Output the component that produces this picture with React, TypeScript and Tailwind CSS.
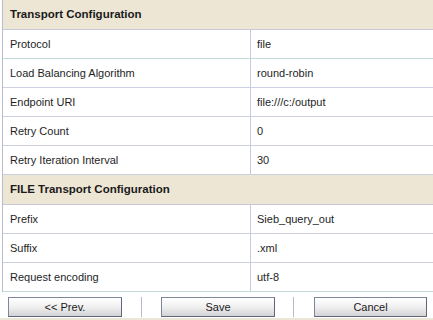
import React from "react";

type Row = { label: string; value: string; line?: string };

const transportRows: Row[] = [
  { label: "Protocol", value: "file", line: "border-[#c2dcdc]" },
  { label: "Load Balancing Algorithm", value: "round-robin" },
  { label: "Endpoint URI", value: "file:///c:/output" },
  { label: "Retry Count", value: "0" },
  { label: "Retry Iteration Interval", value: "30" },
];

const fileRows: Row[] = [
  { label: "Prefix", value: "Sieb_query_out" },
  { label: "Suffix", value: ".xml" },
  { label: "Request encoding", value: "utf-8", line: "border-[#c2dcdc]" },
];

function SectionHeader({ title }: { title: string }) {
  return (
    <div className="h-[30px] flex items-center pl-[7px] bg-[#ede6d5] border-b border-[#c8c8dc] font-bold text-[11.5px] text-[#1a1a1a]">
      {title}
    </div>
  );
}

function DataRow({ row }: { row: Row }) {
  return (
    <div className={`h-[29px] flex border-b ${row.line ?? "border-[#ccd0e2]"}`}>
      <div className="w-[248px] flex items-center pl-[7px] border-r border-[#c8c8e0]">{row.label}</div>
      <div className="flex-1 flex items-center pl-[6px]">{row.value}</div>
    </div>
  );
}

function Btn({ label, w }: { label: string; w: string }) {
  return (
    <button
      className={`${w} h-[20px] flex items-center justify-center border border-[#7d879c] border-b-[#5f6778] border-r-[#5f6778] bg-gradient-to-b from-white via-[#f0f0f0] to-[#d3d3d6] text-[11px] text-[#1a1a1a]`}
    >
      {label}
    </button>
  );
}

export default function App() {
  return (
    <div
      className="w-[433px] h-[320px] bg-white overflow-hidden text-[11px] text-[#1e1e1e]"
      style={{ fontFamily: '"Liberation Sans", Arial, sans-serif' }}
    >
      <div className="ml-[2px] border-l border-[#b8bccb]">
        <SectionHeader title="Transport Configuration" />
        {transportRows.map((r) => (
          <DataRow key={r.label} row={r} />
        ))}
        <SectionHeader title="FILE Transport Configuration" />
        {fileRows.map((r) => (
          <DataRow key={r.label} row={r} />
        ))}
      </div>
      <div className="h-[28px] flex items-start pt-[5px] pl-[8px] border-b-2 border-[#ece6d8]">
        <Btn label="<< Prev." w="w-[114px]" />
        <div className="w-px h-[20px] bg-[#b4bccb] ml-[19px] mr-[19px]" />
        <Btn label="Save" w="w-[114px]" />
        <div className="w-px h-[20px] bg-[#b4bccb] ml-[18px] mr-[20px]" />
        <Btn label="Cancel" w="w-[113px]" />
      </div>
    </div>
  );
}
